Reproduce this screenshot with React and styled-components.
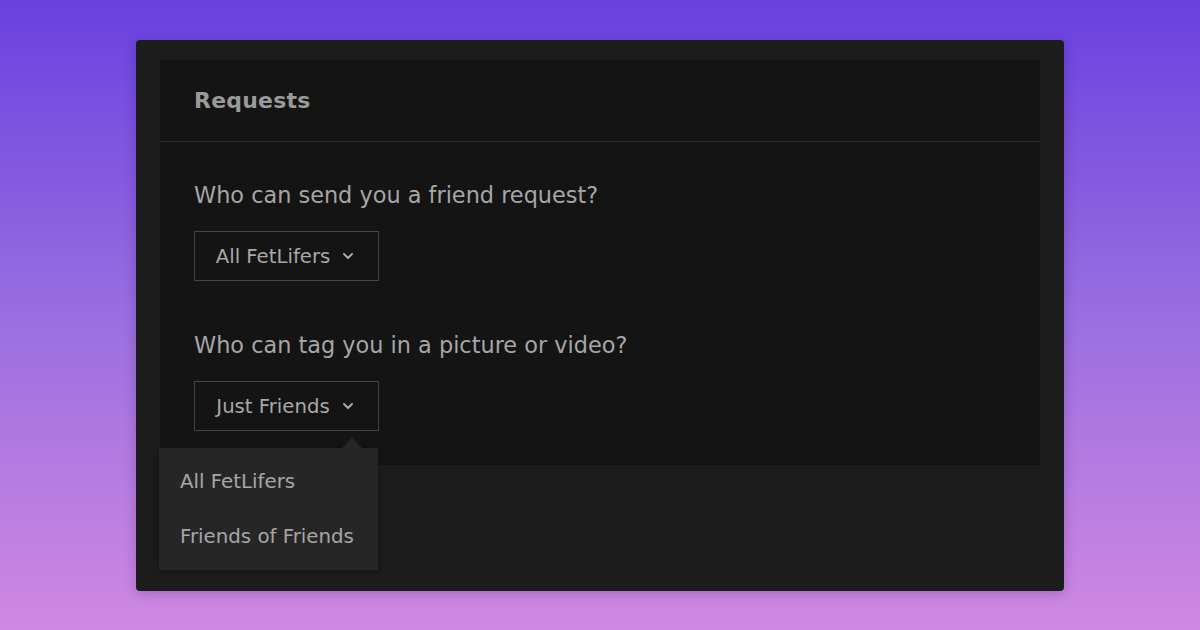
import React from 'react';
import styled, { createGlobalStyle } from 'styled-components';

const GlobalStyle = createGlobalStyle`
  html, body {
    margin: 0;
    padding: 0;
  }
  body {
    font-family: "DejaVu Sans", "Noto Sans", sans-serif;
  }
`;

const Page = styled.div`
  width: 1200px;
  height: 630px;
  box-sizing: border-box;
  padding: 40px 136px 39px;
  background: linear-gradient(180deg, #6a40e0 0%, #9a6ee0 50%, #d088e2 100%);
`;

const Card = styled.div`
  height: 100%;
  box-sizing: border-box;
  background: #1c1c1c;
  border-radius: 4px;
  padding: 20px 24px;
  box-shadow: 0 2px 12px rgba(40, 10, 80, 0.25);
`;

const Panel = styled.section`
  background: #141414;
`;

const PanelHeader = styled.header`
  height: 82px;
  box-sizing: border-box;
  padding: 0 34px 1px;
  display: flex;
  align-items: center;
  border-bottom: 1px solid #2b2b2b;
`;

const Title = styled.h2`
  margin: 0;
  font-size: 22px;
  font-weight: bold;
  color: #9a9a9a;
  letter-spacing: 0.2px;
`;

const PanelBody = styled.div`
  padding: 38px 34px 34px;
  display: flex;
  flex-direction: column;
  gap: 49px;
`;

const Field = styled.div`
  display: flex;
  flex-direction: column;
  align-items: flex-start;
  gap: 21px;
`;

const Label = styled.div`
  font-size: 22.4px;
  color: #a6a6a6;
  line-height: 30px;
`;

const SelectWrap = styled.div`
  position: relative;
`;

const Select = styled.button`
  width: 185px;
  height: 50px;
  box-sizing: border-box;
  border: 1px solid #444;
  background: transparent;
  color: #a8a8a8;
  font-family: inherit;
  font-size: 19.7px;
  display: flex;
  align-items: center;
  justify-content: center;
  gap: 12px;
  padding: 0 3px 0 0;
  cursor: pointer;
`;

const Menu = styled.ul`
  position: absolute;
  left: -35px;
  top: 67px;
  width: 219px;
  margin: 0;
  padding: 6px 0;
  list-style: none;
  background: #262626;
  box-shadow: 0 2px 6px rgba(0, 0, 0, 0.3);

  &::before {
    content: '';
    position: absolute;
    top: -10px;
    right: 16px;
    border-left: 10px solid transparent;
    border-right: 10px solid transparent;
    border-bottom: 10px solid #262626;
  }
`;

const MenuItem = styled.li`
  padding: 0 21px;
  height: 55px;
  display: flex;
  align-items: center;
  font-size: 19.8px;
  color: #a6a6a6;
`;

const Chevron = () => (
  <svg width="12" height="8" viewBox="0 0 12 8" fill="none">
    <path d="M2 2l4 4 4-4" stroke="#a8a8a8" strokeWidth="2" strokeLinecap="round" strokeLinejoin="round" />
  </svg>
);

export default function App() {
  return (
    <>
      <GlobalStyle />
      <Page>
        <Card>
          <Panel>
            <PanelHeader>
              <Title>Requests</Title>
            </PanelHeader>
            <PanelBody>
              <Field>
                <Label>Who can send you a friend request?</Label>
                <Select>
                  All FetLifers <Chevron />
                </Select>
              </Field>
              <Field>
                <Label>Who can tag you in a picture or video?</Label>
                <SelectWrap>
                  <Select>
                    Just Friends <Chevron />
                  </Select>
                  <Menu>
                    <MenuItem>All FetLifers</MenuItem>
                    <MenuItem>Friends of Friends</MenuItem>
                  </Menu>
                </SelectWrap>
              </Field>
            </PanelBody>
          </Panel>
        </Card>
      </Page>
    </>
  );
}
